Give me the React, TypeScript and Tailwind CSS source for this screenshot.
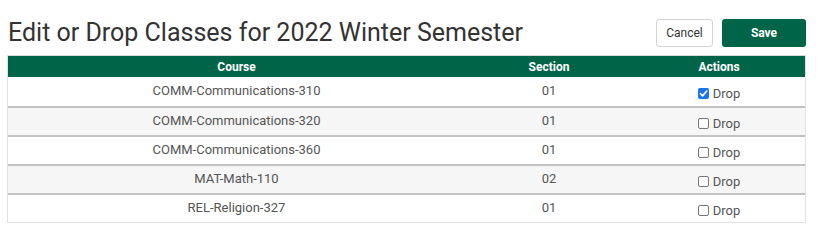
import React from "react";

const rows = [
  { course: "COMM-Communications-310", section: "01", checked: true },
  { course: "COMM-Communications-320", section: "01", checked: false },
  { course: "COMM-Communications-360", section: "01", checked: false },
  { course: "MAT-Math-110", section: "02", checked: false },
  { course: "REL-Religion-327", section: "01", checked: false },
];

function Check({ checked }: { checked: boolean }) {
  if (checked) {
    return (
      <span className="inline-flex h-[11px] w-[11px] items-center justify-center rounded-[2px] bg-[#1a73e8]">
        <svg width="9" height="9" viewBox="0 0 8 8">
          <path d="M1.2 4.2 L3.2 6.1 L6.9 1.8" stroke="white" strokeWidth="1.5" fill="none" strokeLinecap="round" strokeLinejoin="round" />
        </svg>
      </span>
    );
  }
  return <span className="inline-block h-[11px] w-[11px] rounded-[2px] border border-[#777] bg-white" />;
}

export default function App() {
  return (
    <div className="w-[840px] h-[250px] bg-white font-['Roboto',sans-serif]">
      <div className="ml-[7px] w-[799px] pt-[19px]">
        <div className="flex items-center justify-between">
          <h1 className="pl-[1px] text-[25px] leading-[28px] text-[#333]">Edit or Drop Classes for 2022 Winter Semester</h1>
          <div className="flex gap-[9px]">
            <button className="h-[28px] w-[57px] rounded-[3px] border border-[#d4d4d4] bg-white text-[12px] text-[#333]">Cancel</button>
            <button className="h-[28px] w-[84px] rounded-[3px] bg-[#006548] text-[12px] font-bold text-white">Save</button>
          </div>
        </div>
        <div className="mt-[8px] border border-[#e2e2e2] border-t-[#d8d8d8]">
          <div className="grid h-[21px] grid-cols-[457px_168px_1fr] items-center bg-[#006548] text-[12px] font-bold text-white">
            <div className="text-center">Course</div>
            <div className="text-center">Section</div>
            <div className="text-center">Actions</div>
          </div>
          {rows.map((r, i) => (
            <div
              key={i}
              className={
                "grid grid-cols-[457px_168px_1fr] items-center text-[13px] text-[#555] " +
                (i === 0 ? "h-[29px] " : "h-[29px] border-t-2 border-[#c2c2c2] ") +
                (i % 2 === 1 ? "bg-[#f6f6f6]" : "bg-white")
              }
            >
              <div className="text-center -mt-[1px]">{r.course}</div>
              <div className="text-center -mt-[1px]">{r.section}</div>
              <div className="flex items-center justify-center gap-[4px] pt-[4px]">
                <Check checked={r.checked} />
                <span>Drop</span>
              </div>
            </div>
          ))}
        </div>
      </div>
    </div>
  );
}
